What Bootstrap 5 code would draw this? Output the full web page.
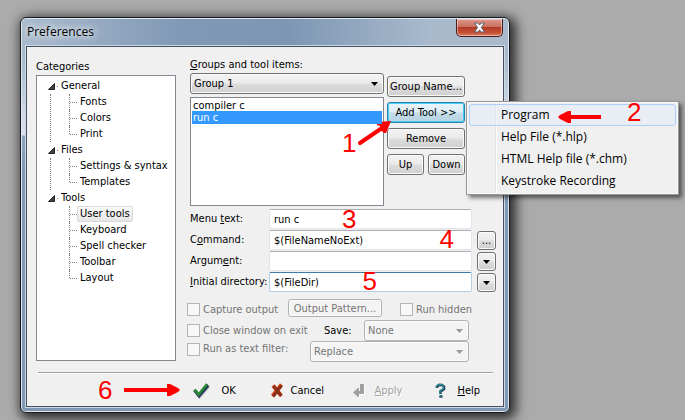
<!DOCTYPE html>
<html lang="en">
<head>
<meta charset="utf-8">
<meta name="viewport" content="width=device-width, initial-scale=1">
<title>Preferences</title>
<link href="https://cdn.jsdelivr.net/npm/bootstrap@5.3.0/dist/css/bootstrap.min.css" rel="stylesheet">
<style>
:root{--ui:"DejaVu Sans Condensed","Noto Sans",sans-serif;--edge:#707070;--dim:#747474}
body{background:#ababab;font:11px/16px var(--ui);color:#000;min-height:100vh;overflow-x:hidden}
button,input,select{font:inherit;color:inherit}
.desk{padding:17px 175px 6px 20px}
.window{border:1px solid #16191d;border-radius:6px;background:linear-gradient(#a9bacd,#a9bacd 40px,#dde5ee 117px,#8fa5bf 118px,#7f98b5 150px);box-shadow:inset 0 0 0 1px #dfe8f1,3px 3px 12px 3px rgba(0,0,0,.75);padding:0 5px 5px}
.titlebar{height:27px;background:linear-gradient(90deg,transparent,#8099b5 32%,#7d97b3 55%,transparent 85%);margin-top:1px;padding:0 1px}
.titlebar h1{font:12px/26px "Open Sans",sans-serif;text-shadow:0 0 6px #fff,0 0 10px #fff}
.shut{width:47px;height:18px;padding:0;border:1px solid #4b1d1b;border-top:0;border-radius:0 0 5px 5px;background:linear-gradient(#dc9a8e,#c9705f 45%,#b13a24 50%,#c75034 80%,#d77e62);box-shadow:inset 0 0 0 1px rgba(255,255,255,.45);line-height:0}
.client{background:#f0f0f0;border:1px solid #455060;box-shadow:0 0 0 1px #ccd8e4;padding:0 7px 0 9px}
.panes{gap:14px}
.cats{flex:0 0 140px;padding:12px 0 1px}
.tools{padding-top:10px;min-width:0}
.tree{border:1px solid #828790;background:#fff;padding:2px 0 0 11px}
.tree ul{list-style:none;margin:0;padding:0}
.tree .twig{display:flex;align-items:center;height:16px;gap:2px}
.tree .twig svg{display:block}
.tree .twig i{width:1px;border-top:1px solid #808080}
.tree .twig button,.tree .leaf button{border:1px solid transparent;border-radius:2px;background:none;padding:0 2px;line-height:14px;height:16px;white-space:nowrap}
.tree .twig button{padding:0}
.tree .kids{border-left:1px dotted #808080;margin-left:2px;padding-left:18px}
.tree .branch:last-child .kids{border-color:transparent}
.tree .leaf{display:flex;align-items:center;height:16px}
.tree .leaf::before{content:"";align-self:stretch;border-left:1px dotted #808080}
.tree .leaf:last-child::before{align-self:flex-start;height:8px}
.tree .leaf::after{content:"";order:1;width:7px;border-top:1px dotted #808080}
.tree .leaf button{order:2}
.tree .leaf button.picked{border-color:#d9d9d9;background:linear-gradient(#fafafa,#e6e6e6)}
.drop{appearance:none;border:1px solid var(--edge);border-radius:3px;height:21px;padding:1px 16px 0 3px;background:url("data:image/svg+xml,%3Csvg xmlns='http://www.w3.org/2000/svg' width='7' height='4'%3E%3Cpath d='M0 0h7L3.500 4z'/%3E%3C/svg%3E") right 5px center no-repeat,linear-gradient(#f2f2f2,#ebebeb 48%,#dddddd 52%,#cfcfcf);box-shadow:inset 0 0 0 1px #fbfbfb}
.drop:disabled{opacity:1;color:var(--dim);border-color:#adb2b5;background:url("data:image/svg+xml,%3Csvg xmlns='http://www.w3.org/2000/svg' width='7' height='4'%3E%3Cpath fill='%23999' d='M0 0h7L3.500 4z'/%3E%3C/svg%3E") right 5px center no-repeat,#f4f4f4}
.items{border:1px solid #828790;border-radius:0;background:#fff;height:109px;padding:1px;margin-top:3px}
.items .list-group-item{border:0;margin:0;padding:0 1px;line-height:13px;background:none;color:#000}
.items .list-group-item.active{background:#3399ff;color:#fff}
.push{border:1px solid var(--edge);border-radius:3px;height:21px;padding:0;background:linear-gradient(#f2f2f2,#ebebeb 48%,#dddddd 52%,#cfcfcf);box-shadow:inset 0 0 0 1px #fbfbfb;white-space:nowrap;line-height:19px}
.push.hot{border-color:#2c7fa8;background:linear-gradient(#eaf4f9,#dcecf4 48%,#c4dde9 52%,#b6d3e2);box-shadow:inset 0 0 0 1px #45d0f5}
.push:disabled{color:var(--dim);border-color:#adb2b5;background:#f4f4f4}
.side{flex:0 0 78px;margin:0 31px 0 3px;padding-top:19px;gap:5px}
.fields{display:grid;grid-template-columns:75px 1fr 19px;column-gap:4px;row-gap:1px;margin-top:3px}
.fields label{line-height:20px;white-space:nowrap}
.fields .entry{position:relative;margin-right:1px}
.fields input{width:100%;height:20px;border:1px solid #e2e3ea;border-top-color:#abadb3;border-radius:2px;padding:0 4px;background:#fff;outline:0;display:block}
.fields .focused input{border-color:#b5cfe7;border-top-color:#3d7bad}
.fields .push{height:19px;line-height:14px;align-self:end}
.fields .push svg{display:block;margin:auto}
.opts{margin:7px 27px 0 -3px}
.opts>div{display:flex;align-items:center;height:21px}
.opts label{color:var(--dim);display:flex;align-items:center;gap:3px;white-space:nowrap}
.opts input{appearance:none;width:13px;height:13px;border:1px solid #b5b5b5;background:#f8f8f8;margin:0;flex:none}
.opts .outp{width:94px;height:18px;line-height:15px;align-self:start;margin-right:18px}
.opts .tail{width:69px}
.opts .save{color:#000;width:40px}
.opts .none{width:105px}
.opts .repl{width:159px}
.rule{border-top:1px solid #a0a0a0;border-bottom:1px solid #fff;margin:10px 3px 0 2px}
.foot{padding-left:62px}
.foot .go{margin:0 11px 0 12px}
.foot button{border:0;background:none;padding:1px 0 0;display:flex;align-items:center;gap:6px;height:32px;width:82px;flex:none}
.foot button.wide{gap:11px;width:77px}
.foot button.last{width:auto}
.foot button:disabled{gap:8px;width:83px;color:#a0a0a0;text-shadow:1px 1px #fff}
.foot svg,.note svg{display:block;flex:none}
.digit{color:red;font:26px/24px "Liberation Sans",sans-serif}
.note{position:absolute;pointer-events:none}
.note-one{left:-45px;top:17px}
.note-one .digit{margin-top:12px}
.note-two{left:90px;top:-2px}
.note-two svg{margin:10px 24px 0 0}
.n3{left:36%;top:-2px}
.n4{right:18px;top:-3px}
.n5{left:46%;top:-3px}
.flyout{position:absolute;z-index:5;left:79px;top:-1px;width:213px;padding:2px;border:1px solid #979797;background:linear-gradient(90deg,transparent 28px,#e0e0e0 28px,#e0e0e0 29px,#fff 29px,#fff 30px,transparent 30px) #f0f0f0;box-shadow:inset 0 0 0 1px #f8f8f8,3px 3px 4px rgba(0,0,0,.5);font:12px/22px "Open Sans",sans-serif}
.flyout button{display:block;width:100%;height:22px;text-align:left;border:1px solid transparent;border-radius:3px;background:none;padding:0 0 0 31px;line-height:20px;white-space:nowrap}
.flyout button.hover{border-color:#aecff7;background:rgba(225,235,250,.5)}
</style>
</head>
<body>
<div class="desk">
<main class="window">
  <header class="titlebar d-flex justify-content-between">
    <h1 class="m-0">Preferences</h1>
    <button class="shut d-flex align-items-center justify-content-center" aria-label="Close"><svg width="13" height="11" viewBox="0 0 13 11"><path d="M1.500 1h3.300l1.700 2 1.700-2h3.300L8.400 5.500l3.100 4.500H8.200L6.500 7.900 4.800 10H1.500l3.100-4.500z" fill="#fff" stroke="#535b6b"/></svg></button>
  </header>
  <div class="client">
    <div class="panes d-flex">
      <section class="cats d-flex flex-column">
        <div id="cat">Categories</div>
        <nav class="tree flex-grow-1" aria-labelledby="cat">
          <ul>
            <li class="branch"><div class="twig"><svg width="7" height="7"><path d="M6.500 .5v6h-6z" fill="#444" stroke="#222"/></svg><i></i><button>General</button></div>
              <ul class="kids"><li class="leaf"><button>Fonts</button></li><li class="leaf"><button>Colors</button></li><li class="leaf"><button>Print</button></li></ul></li>
            <li class="branch"><div class="twig"><svg width="7" height="7"><path d="M6.500 .5v6h-6z" fill="#444" stroke="#222"/></svg><i></i><button>Files</button></div>
              <ul class="kids"><li class="leaf"><button>Settings &amp; syntax</button></li><li class="leaf"><button>Templates</button></li></ul></li>
            <li class="branch"><div class="twig"><svg width="7" height="7"><path d="M6.500 .5v6h-6z" fill="#444" stroke="#222"/></svg><i></i><button>Tools</button></div>
              <ul class="kids"><li class="leaf"><button class="picked">User tools</button></li><li class="leaf"><button>Keyboard</button></li><li class="leaf"><button>Spell checker</button></li><li class="leaf"><button>Toolbar</button></li><li class="leaf"><button>Layout</button></li></ul></li>
          </ul>
        </nav>
      </section>
      <section class="tools flex-grow-1">
        <div class="d-flex">
          <div class="flex-grow-1">
            <label class="d-block" for="grp"><u>G</u>roups and tool items:</label>
            <select class="drop w-100 d-block" id="grp"><option>Group 1</option></select>
            <div class="items list-group"><button class="list-group-item list-group-item-action">compiler c</button><button class="list-group-item list-group-item-action active">run c</button></div>
          </div>
          <div class="side d-flex flex-column">
            <button class="push">Group Name...</button>
            <div class="position-relative">
              <button class="push hot w-100 d-block">Add Tool &gt;&gt;</button>
              <div class="flyout">
                <button class="hover">Program</button><button>Help File (*.hlp)</button><button>HTML Help file (*.chm)</button><button>Keystroke Recording</button>
                <span class="note note-two d-flex align-items-start"><svg width="46" height="14"><path d="M44 7H12" stroke="red" stroke-width="4"/><path d="M1 7l2-2 8-4h3v12h-3L3 9z" fill="red"/></svg><span class="digit">2</span></span>
              </div>
              <span class="note note-one d-flex align-items-start"><span class="digit">1</span><svg width="36" height="30"><path d="M4 24L26 9" stroke="red" stroke-width="4" stroke-linecap="round"/><path d="M35 2l-14 1v3l3 1 1 4 3 3h2z" fill="red"/></svg></span>
            </div>
            <button class="push">Remove</button>
            <div class="d-flex gap-1"><button class="push w-50">Up</button><button class="push w-50">Down</button></div>
          </div>
        </div>
        <div class="fields">
          <label for="f1">Menu <u>t</u>ext:</label><div class="entry"><input id="f1" value="run c"><span class="note digit n3">3</span></div><span></span>
          <label for="f2">C<u>o</u>mmand:</label><div class="entry"><input id="f2" value="$(FileNameNoExt)"><span class="note digit n4">4</span></div><button class="push">...</button>
          <label for="f3">Argum<u>e</u>nt:</label><div class="entry"><input id="f3"></div><button class="push" aria-label="Argument choices"><svg width="7" height="4"><path d="M0 0h7L3.500 4z"/></svg></button>
          <label for="f4"><u>I</u>nitial directory:</label><div class="entry focused"><input id="f4" value="$(FileDir)"><span class="note digit n5">5</span></div><button class="push" aria-label="Directory choices"><svg width="7" height="4"><path d="M0 0h7L3.500 4z"/></svg></button>
        </div>
        <div class="opts">
          <div><label class="flex-grow-1"><input type="checkbox" disabled>Capture output</label><button class="push outp" disabled>Output Pattern...</button><label class="tail"><input type="checkbox" disabled>Run hidden</label></div>
          <div><label class="flex-grow-1"><input type="checkbox" disabled>Close window on exit</label><label class="save" for="sv">Save:</label><select class="drop none" id="sv" disabled><option>None</option></select></div>
          <div><label class="flex-grow-1 align-self-start"><input type="checkbox" disabled>Run as text filter:</label><select class="drop repl" aria-label="Filter mode" disabled><option>Replace</option></select></div>
        </div>
      </section>
    </div>
    <div class="rule"></div>
    <footer class="foot d-flex align-items-center">
      <span class="digit">6</span>
      <svg class="go" width="58" height="16"><path d="M0 8h46" stroke="red" stroke-width="4"/><path d="M56 8l-2 2-8 4h-3V2h3l8 4z" fill="red"/></svg>
      <button class="wide"><svg width="17" height="17" viewBox="0 0 17 17"><path d="M2.500 9.500l4 5L15.500 4" fill="none" stroke="#b4b4b4" stroke-width="3.500"/><path d="M1.500 8l4.500 5.500L15 3" fill="none" stroke="#1f3a5c" stroke-width="3.500"/><path d="M1.500 7.500l4 5L14 2" fill="none" stroke="#2f8a35" stroke-width="2.500"/></svg>OK</button>
      <button><svg width="14" height="15" viewBox="0 0 14 15"><path d="M3 2.500l8 10M11.500 1.500l-9 11.500" fill="none" stroke="#e8491c" stroke-width="4"/><path d="M3.500 3l8 10M11.500 2.500l-8.500 11" fill="none" stroke="#87301a" stroke-width="3"/></svg>Cancel</button>
      <button disabled><svg width="14" height="16" viewBox="0 0 14 16"><path d="M9 2h4v10H8v3h-1L2 10.500 7 6h1v3h1z" fill="#fff"/><path d="M8 1h4v10H7v3H6L1 9.500 6 5h1v3h1z" fill="#a0a0a0"/></svg><span><u>A</u>pply</span></button>
      <button class="wide last"><svg width="11" height="16" viewBox="0 0 11 16"><path d="M2 5V3.500L4 2h3l2 1.500V6L5.500 8.500V11M4.500 13.500h3" fill="none" stroke="#1c3550" stroke-width="2.500"/><path d="M1.500 4.500V3L3.500 1.500h3L8.500 3v2.500L5 8v2.500M4 13.500h2.500" fill="none" stroke="#2b8c93" stroke-width="1.500"/></svg><span><u>H</u>elp</span></button>
    </footer>
  </div>
</main>
</div>
<script src="https://cdn.jsdelivr.net/npm/bootstrap@5.3.0/dist/js/bootstrap.bundle.min.js"></script>
<script>
const field=document.getElementById("f4");
field.focus();
field.setSelectionRange(field.value.length,field.value.length);
</script>
</body>
</html>
